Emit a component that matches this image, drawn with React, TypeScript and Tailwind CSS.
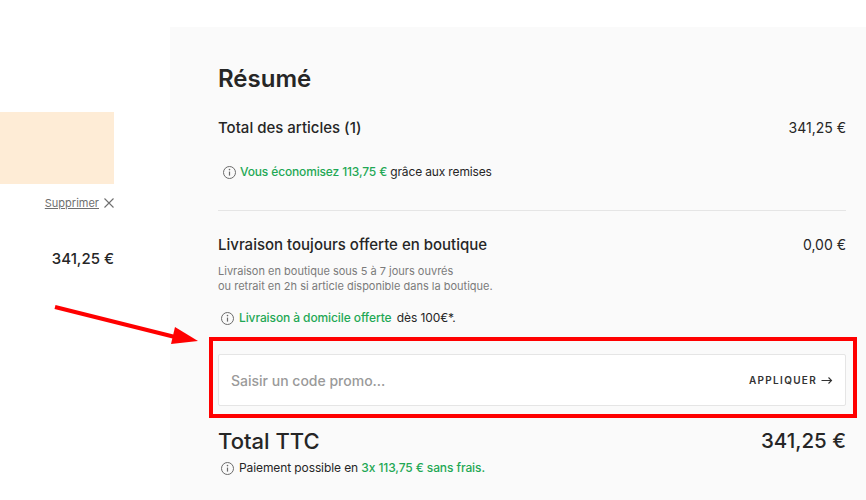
const font = { fontFamily: '"Inter", "Liberation Sans", sans-serif' };

const InfoIcon = () => (
  <svg width="15" height="15" viewBox="0 0 15 15" fill="none" className="shrink-0 text-[#6b6b6b]">
    <circle cx="7.5" cy="7.5" r="6" stroke="currentColor" strokeWidth="1" />
    <path d="M7.5 6.6v4" stroke="currentColor" strokeWidth="1.2" />
    <circle cx="7.5" cy="4.6" r="0.8" fill="currentColor" />
  </svg>
);

const Row = ({ label, price }: { label: string; price: string }) => (
  <div className="flex items-center justify-between text-[15px] leading-5 font-medium text-[#262626]">
    <span>{label}</span>
    <span className="text-[14px] font-normal">{price}</span>
  </div>
);

export default function App() {
  return (
    <div className="relative flex h-[500px] w-[866px] overflow-hidden bg-white [font-feature-settings:'calt'_0]" style={font}>
      {/* colonne article, coupée à gauche */}
      <div className="flex w-[114px] shrink-0 flex-col items-end pt-[112px]">
        <div className="h-[72px] w-full bg-[#feecd6]" />
        <div className="mt-[11px] flex items-center gap-[5px]">
          <span className="text-[11px] leading-4 text-[#6f6f6f] underline">Supprimer</span>
          <svg width="10" height="10" viewBox="0 0 10 10" className="text-[#6f6f6f]">
            <path d="M0.5 0.5l9 9M9.5 0.5l-9 9" stroke="currentColor" strokeWidth="1.1" />
          </svg>
        </div>
        <div className="mt-[38px] text-[15px] leading-5 font-medium text-[#262626]">341,25 €</div>
      </div>

      {/* résumé */}
      <div className="mt-[27px] ml-[56px] flex h-[473px] flex-1 flex-col bg-[#fafafa] pr-5 pl-12">
        <h2 className="mt-[36px] text-[24px] leading-8 font-semibold text-[#262626]">Résumé</h2>

        <div className="mt-[23px]">
          <Row label="Total des articles (1)" price="341,25 €" />
        </div>
        <div className="mt-[26px] flex items-center gap-[3px] pl-[4px] text-[12px] leading-4 tracking-[-0.15px] text-[#262626]">
          <InfoIcon />
          <span>
            <span className="font-medium text-[#1fa855]">Vous économisez 113,75 €</span> grâce aux remises
          </span>
        </div>

        <div className="mt-[30px] h-px w-full bg-[#e5e5e5]" />

        <div className="mt-6">
          <Row label="Livraison toujours offerte en boutique" price="0,00 €" />
        </div>
        <p className="mt-[9px] text-[11px] leading-[15px] text-[#7a7a7a]">
          Livraison en boutique sous 5 à 7 jours ouvrés
          <br />
          ou retrait en 2h si article disponible dans la boutique.
        </p>
        <div className="mt-[16px] flex items-center gap-[4px] pl-[2px] text-[12px] leading-4 tracking-[-0.1px] text-[#262626]">
          <InfoIcon />
          <span>
            <span className="mr-[2px] font-medium text-[#1fa855]">Livraison à domicile offerte</span> dès 100€*.
          </span>
        </div>

        <div className="mt-[28px] flex h-[52px] items-center justify-between rounded-[2px] border border-[#e5e5e5] bg-white pr-3 pl-3">
          <span className="text-[14px] font-medium text-[#9a9a9a]">Saisir un code promo...</span>
          <span className="flex items-center gap-[4px] text-[10px] font-semibold tracking-[1.3px] text-[#333333]">
            APPLIQUER
            <svg width="12" height="9" viewBox="0 0 12 9" fill="none" className="text-[#333333]">
              <path d="M0.5 4.5h10M7.5 1.5l3 3-3 3" stroke="currentColor" strokeWidth="1.1" />
            </svg>
          </span>
        </div>

        <div className="mt-[21px] flex items-center justify-between leading-7 font-medium text-[#262626]">
          <span className="text-[22px]">Total TTC</span>
          <span className="text-[20.5px]">341,25 €</span>
        </div>
        <div className="mt-[5px] flex items-center gap-[4px] pl-[2px] text-[12px] leading-4 tracking-[-0.1px] text-[#262626]">
          <InfoIcon />
          <span>
            Paiement possible en <span className="font-medium text-[#1fa855]">3x 113,75 € sans frais.</span>
          </span>
        </div>
      </div>

      {/* annotation rouge par-dessus la capture */}
      <div className="absolute top-[337px] left-[209px] h-[81px] w-[648px] border-4 border-[#ff0000]" />
      <svg width="210" height="60" viewBox="0 0 210 60" className="absolute top-[300px] left-0">
        <path d="M55 7L175 37" stroke="#ff0000" strokeWidth="4" />
        <path d="M198 41L175 27L171 44Z" fill="#ff0000" />
      </svg>
    </div>
  );
}
